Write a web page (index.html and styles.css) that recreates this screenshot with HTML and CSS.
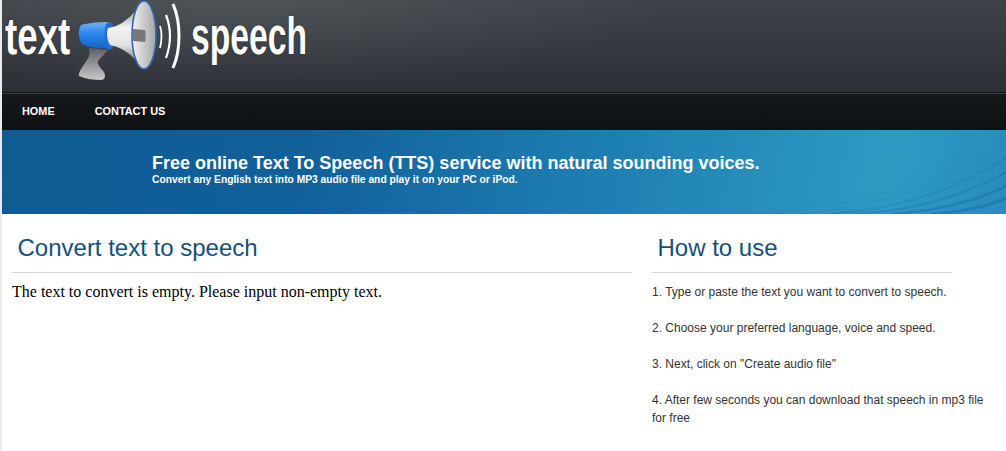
FILE: index.html
```html
<!DOCTYPE html>
<html lang="en">
<head>
  <meta charset="UTF-8">
  <title>Text To Speech</title>
  <link rel="stylesheet" href="styles.css">
</head>
<body>
  <!-- Header -->
  <div class="header">
    <div class="logo">
      <span class="logo-word logo-text">text</span>
      <svg class="logo-icon" width="112" height="82" viewBox="0 0 112 82">
        <defs>
          <linearGradient id="blue" x1="0" y1="0" x2="0" y2="1">
            <stop offset="0" stop-color="#6fb2f2"/>
            <stop offset="0.45" stop-color="#2a86ee"/>
            <stop offset="1" stop-color="#1763c4"/>
          </linearGradient>
          <linearGradient id="grip" x1="0" y1="0" x2="0" y2="1">
            <stop offset="0" stop-color="#5d5f62"/>
            <stop offset="1" stop-color="#c9c9c9"/>
          </linearGradient>
          <linearGradient id="cone" x1="0" y1="0" x2="0" y2="1">
            <stop offset="0" stop-color="#9c9c9c"/>
            <stop offset="0.35" stop-color="#f4f4f4"/>
            <stop offset="0.7" stop-color="#e2e2e2"/>
            <stop offset="1" stop-color="#8d8d8d"/>
          </linearGradient>
          <linearGradient id="dish" x1="0" y1="0" x2="1" y2="0">
            <stop offset="0" stop-color="#f2f2f2"/>
            <stop offset="1" stop-color="#a5a5a5"/>
          </linearGradient>
        </defs>
        <path d="M19 48 L38 50 L28 61 C27 65 31 68 34 72 C36 76 35 80 31 80 C24 80 16 79 9 76 C8 72 13 66 17 60 C20 56 20 52 19 48 Z" fill="url(#grip)"/>
        <path d="M11 25 C18 23 28 22 38 22 L37 48 C28 49 18 47 12 44 C8 38 8 30 11 25 Z" fill="url(#blue)"/>
        <path d="M36 24 C38 22 41 22 43 24 L43 48 C41 50 38 50 36 48 C34 40 34 30 36 24 Z" fill="#1f6fd6"/>
        <path d="M38 28 C48 27 58 20 66 10 L66 60 C58 52 50 47 40 45 C37 40 36 33 38 28 Z" fill="url(#cone)"/>
        <ellipse cx="74" cy="35" rx="12" ry="34" fill="url(#dish)" stroke="#2f66b8" stroke-width="1.6"/>
        <path d="M63 29 L75 30 C76 33 76 38 75 42 L63 41 Z" fill="#77787a"/>
        <g fill="none" stroke="#fff" stroke-linecap="butt">
          <path d="M90 26 C92 31 92 41 90 48" stroke-width="1.8"/>
          <path d="M96 15 C101 28 101 44 96 58" stroke-width="2.2"/>
          <path d="M103 4 C111 22 111 50 103 68" stroke-width="3"/>
        </g>
      </svg>
      <span class="logo-word logo-speech">speech</span>
    </div>
  </div>

  <!-- Nav -->
  <div class="nav">
    <a class="nav-link" href="#">HOME</a>
    <a class="nav-link" href="#">CONTACT US</a>
  </div>

  <!-- Banner -->
  <div class="banner">
    <svg class="banner-waves" width="300" height="84" viewBox="0 0 300 84">
      <g fill="none" stroke="#1c72a8">
        <path d="M60 84 C150 76 240 48 300 8" stroke-opacity="0.2"/>
        <path d="M90 84 C170 78 245 52 300 18" stroke-opacity="0.25"/>
        <path d="M120 84 C190 80 250 60 300 28" stroke-opacity="0.3" stroke-width="1.5"/>
        <path d="M150 84 C205 81 258 66 300 42" stroke-opacity="0.4" stroke-width="2"/>
        <path d="M185 84 C225 82 268 72 300 56" stroke-opacity="0.55" stroke-width="2.5"/>
        <path d="M225 84 C250 83 280 77 300 68" stroke-opacity="0.6" stroke-width="3"/>
      </g>
    </svg>
    <h1 class="banner-title">Free online Text To Speech (TTS) service with natural sounding voices.</h1>
    <p class="banner-sub">Convert any English text into MP3 audio file and play it on your PC or iPod.</p>
  </div>

  <!-- Content -->
  <div class="content">
    <div class="main-col">
      <h2 class="section-title">Convert text to speech</h2>
      <p class="message">The text to convert is empty. Please input non-empty text.</p>
    </div>
    <div class="side-col">
      <h2 class="section-title">How to use</h2>
      <div class="steps">
        <p>1. Type or paste the text you want to convert to speech.</p>
        <p>2. Choose your preferred language, voice and speed.</p>
        <p>3. Next, click on "Create audio file"</p>
        <p>4. After few seconds you can download that speech in mp3 file for free</p>
      </div>
    </div>
  </div>
</body>
</html>
```

FILE: styles.css
```css
/* General Styling */
html {
  background: #fff;
}

body {
  margin: 0;
  height: 451px;
  overflow: hidden;
  border-left: 2px solid #ececec;
  font-family: "Liberation Sans", Arial, sans-serif;
  background: #fff;
}

/* Header */
.header {
  height: 93px;
  background:
    radial-gradient(ellipse 420px 90px at 240px 0, rgba(100, 110, 110, 0.4), rgba(100, 110, 110, 0)),
    linear-gradient(to bottom, #3f4249 0%, #2c2f35 100%);
  border-bottom: 1px solid #131415;
  box-sizing: border-box;
}

.logo {
  display: flex;
  align-items: flex-start;
  height: 92px;
}

/* no condensed font here, so the words get squeezed */
.logo-word {
  flex: none;
  font-weight: bold;
  font-size: 51px;
  line-height: 56px;
  color: #fff;
  margin-top: 9px;
  white-space: nowrap;
  transform-origin: left top;
  text-shadow: 0 0 2px #222;
}

.logo-text {
  width: 66px;
  margin-left: 3px;
  transform: scaleX(0.72);
}

.logo-icon {
  display: block;
  flex: none;
  margin-left: -1px;
}

.logo-speech {
  width: 115px;
  margin-left: 9px;
  transform: scaleX(0.66);
}

/* Nav */
.nav {
  height: 37px;
  display: flex;
  align-items: center;
  gap: 40px;
  padding: 0 0 2px 20px;
  background: linear-gradient(to bottom, #16191c, #0e1114);
  border-top: 1px solid #3a3c3e;
  box-sizing: border-box;
}

.nav-link {
  color: #fff;
  font-size: 10.9px;
  font-weight: bold;
  text-decoration: none;
}

/* Banner */
.banner {
  position: relative;
  height: 84px;
  overflow: hidden;
  box-sizing: border-box;
  padding: 23px 0 0 150px;
  color: #fff;
  background: linear-gradient(100deg, #0f5b94 0%, #11609a 30%, #1e7fb2 60%, #2e9ac4 88%, #288bbd 100%);
}

.banner-waves {
  position: absolute;
  right: 0;
  top: 0;
}

.banner-title {
  position: relative;
  margin: 0;
  font-size: 18px;
  line-height: 21px;
  font-weight: bold;
}

.banner-sub {
  position: relative;
  margin: 0;
  font-size: 10.25px;
  line-height: 11px;
  font-weight: bold;
}

/* Content */
.content {
  display: flex;
  padding: 0 0 0 10px;
}

.main-col {
  width: 620px;
  margin-right: 20px;
}

.side-col {
  width: 300px;
}

.section-title {
  margin: 0;
  height: 59px;
  padding: 20px 0 0 5.5px;
  box-sizing: border-box;
  font-size: 24px;
  line-height: 28px;
  font-weight: normal;
  color: #15507c;
  border-bottom: 1px solid #d2d2d6;
}

.message {
  margin: 10px 0 0;
  font-family: "Liberation Serif", "Times New Roman", serif;
  font-size: 16px;
  line-height: 18px;
  color: #000;
}

.steps {
  width: 340px;
  padding-top: 10px;
  font-size: 12px;
  line-height: 18px;
  color: #333;
}

.steps p {
  margin: 0 0 18px;
}
```
